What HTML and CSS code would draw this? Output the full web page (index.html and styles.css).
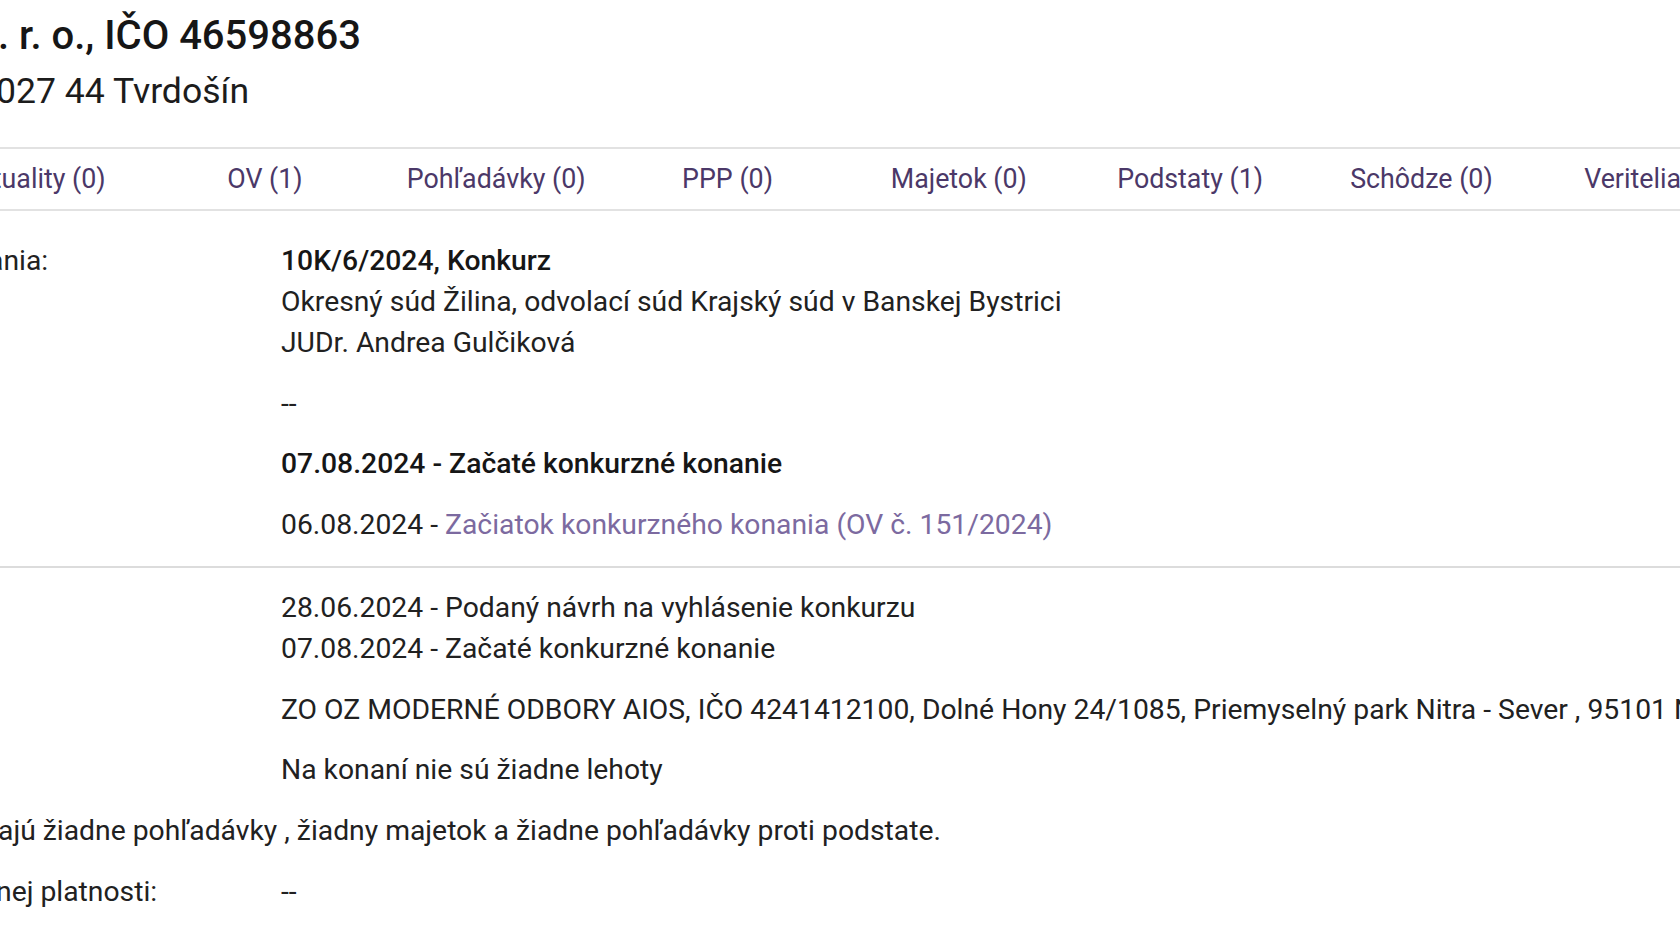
FILE: index.html
```html
<!DOCTYPE html>
<html lang="sk">

<head>
    <meta charset="UTF-8">
    <meta name="viewport" content="width=device-width, initial-scale=1.0">
    <title>Konanie 10K/6/2024</title>

    <link rel="stylesheet" href="styles.css">
</head>

<body>
    <div class="page">
        <!-- hlavička subjektu -->
        <header class="head">
            <h1 class="head-title">. r. o., IČO 46598863</h1>
            <p class="head-address">027 44 Tvrdošín</p>
        </header>

        <!-- záložky -->
        <nav class="tabs">
            <a href="#">Aktuality (0)</a>
            <a href="#">OV (1)</a>
            <a href="#">Pohľadávky (0)</a>
            <a href="#">PPP (0)</a>
            <a href="#">Majetok (0)</a>
            <a href="#">Podstaty (1)</a>
            <a href="#">Schôdze (0)</a>
            <a href="#">Veritelia (0)</a>
        </nav>

        <!-- detail konania -->
        <section class="detail">
            <div class="group">
                <div class="row">
                    <div class="label cut-lg">ania:</div>
                    <div class="value">
                        <p class="strong">10K/6/2024, Konkurz</p>
                        <p>Okresný súd Žilina, odvolací súd Krajský súd v Banskej Bystrici</p>
                        <p>JUDr. Andrea Gulčiková</p>
                    </div>
                </div>
                <div class="row">
                    <div class="label"></div>
                    <div class="value">--</div>
                </div>
                <div class="row">
                    <div class="label"></div>
                    <div class="value strong">07.08.2024 - Začaté konkurzné konanie</div>
                </div>
                <div class="row">
                    <div class="label"></div>
                    <div class="value">06.08.2024 - <a href="#">Začiatok konkurzného konania (OV č. 151/2024)</a></div>
                </div>
            </div>

            <div class="group">
                <div class="row">
                    <div class="label"></div>
                    <div class="value">
                        <p>28.06.2024 - Podaný návrh na vyhlásenie konkurzu</p>
                        <p>07.08.2024 - Začaté konkurzné konanie</p>
                    </div>
                </div>
                <div class="row">
                    <div class="label"></div>
                    <div class="value nowrap">ZO OZ MODERNÉ ODBORY AIOS, IČO 4241412100, Dolné Hony 24/1085, Priemyselný park Nitra - Sever , 95101 Nitra</div>
                </div>
                <div class="row">
                    <div class="label"></div>
                    <div class="value">Na konaní nie sú žiadne lehoty</div>
                </div>
                <div class="row">
                    <div class="full cut-sm">ajú žiadne pohľadávky , žiadny majetok a žiadne pohľadávky proti podstate.</div>
                </div>
                <div class="row">
                    <div class="label cut-md">nej platnosti:</div>
                    <div class="value">--</div>
                </div>
            </div>
        </section>
    </div>
</body>

</html>
```

FILE: styles.css
```css
* {
    box-sizing: border-box;
}

html,
body {
    margin: 0;
    padding: 0;
    background: #fff;
    overflow: hidden;
}

body {
    font-family: Roboto, "Noto Sans", "Liberation Sans", sans-serif;
    color: #212121;
}

p {
    margin: 0;
}

/* hlavička */
.head {
    padding-top: 12px;
}

.head-title {
    margin: 0;
    font-size: 40px;
    line-height: 48px;
    font-weight: 500;
    color: #161616;
    white-space: nowrap;
    text-indent: -2px;
}

.head-address {
    margin-top: 7px;
    font-size: 35.6px;
    line-height: 48px;
    color: #1c1c1c;
    white-space: nowrap;
    text-indent: -4px;
}

/* záložky */
.tabs {
    margin-top: 32px;
    border-top: 2px solid #e2e2e2;
    border-bottom: 2px solid #e2e2e2;
    display: flex;
    overflow: hidden;
}

.tabs a {
    flex: 0 0 231.3px;
    text-align: center;
    line-height: 60px;
    font-size: 26.8px;
    font-weight: 400;
    color: #4b3868;
    text-decoration: none;
    white-space: nowrap;
}

.tabs a:first-child {
    margin-left: -82px;
}

/* detail */
.detail {
    padding-top: 30px;
    font-size: 28.3px;
    line-height: 40.9px;
}

.group {
    display: flex;
    flex-direction: column;
    gap: 19.9px;
}

.group+.group {
    margin-top: 19.9px;
    padding-top: 19.9px;
    border-top: 2px solid #dcdcdc;
}

.row {
    display: grid;
    grid-template-columns: 281px 1fr;
}

.label {
    white-space: nowrap;
}

/* texty orezané na ľavom okraji */
.cut-sm {
    text-indent: -2px;
}

.cut-md {
    text-indent: -4px;
}

.cut-lg {
    text-indent: -12px;
}

.full {
    grid-column: 1 / -1;
    white-space: nowrap;
}

.nowrap {
    white-space: nowrap;
}

.strong {
    font-weight: 500;
    color: #161616;
}

.value a {
    color: #7c6aa0;
    text-decoration: none;
}
```
